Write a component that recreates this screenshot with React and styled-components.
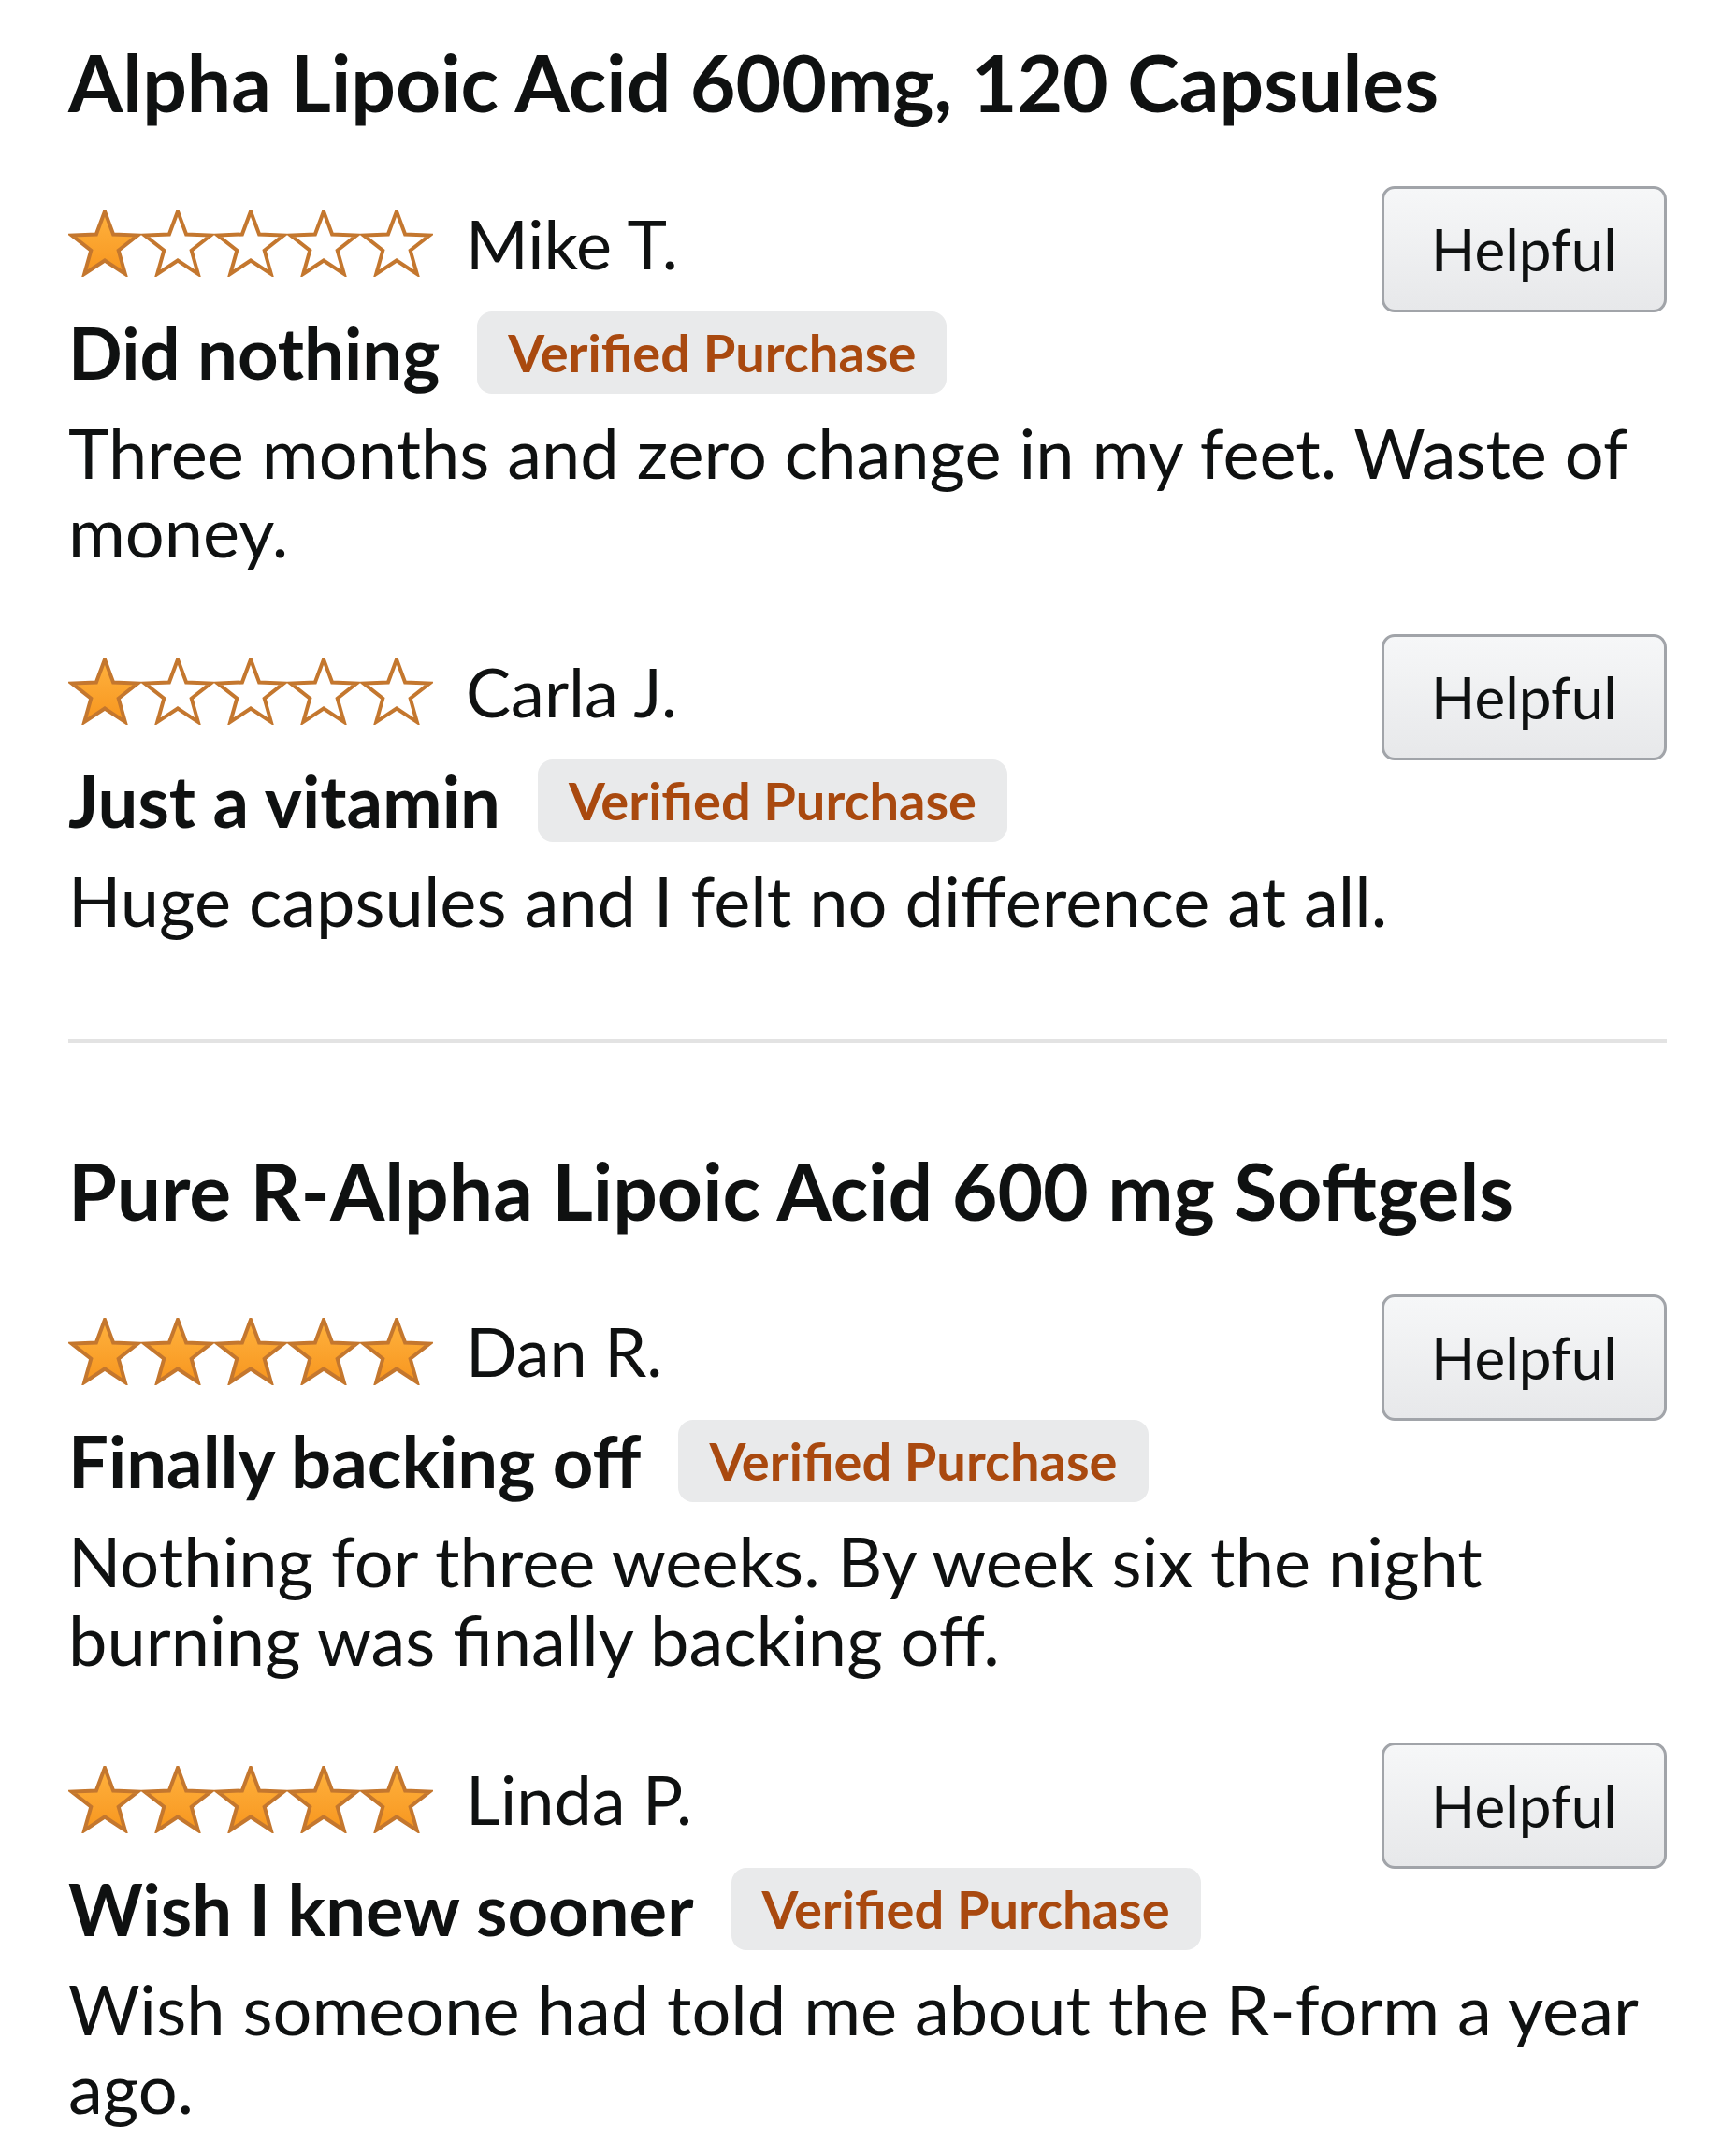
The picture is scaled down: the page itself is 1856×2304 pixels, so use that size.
import React from 'react'
import styled, { createGlobalStyle } from 'styled-components'

const GlobalStyle = createGlobalStyle`
  html, body {
    margin: 0;
    padding: 0;
    background: #ffffff;
  }
  body {
    font-family: Lato, "Open Sans", sans-serif;
    color: #0f1111;
  }
`

const products = [
    {
        title: 'Alpha Lipoic Acid 600mg, 120 Capsules',
        reviews: [
            {
                stars: 1,
                name: 'Mike T.',
                headline: 'Did nothing',
                body: 'Three months and zero change in my feet. Waste of money.'
            },
            {
                stars: 1,
                name: 'Carla J.',
                headline: 'Just a vitamin',
                body: 'Huge capsules and I felt no difference at all.'
            }
        ]
    },
    {
        title: 'Pure R-Alpha Lipoic Acid 600 mg Softgels',
        reviews: [
            {
                stars: 5,
                name: 'Dan R.',
                headline: 'Finally backing off',
                body: 'Nothing for three weeks. By week six the night burning was finally backing off.'
            },
            {
                stars: 5,
                name: 'Linda P.',
                headline: 'Wish I knew sooner',
                body: 'Wish someone had told me about the R-form a year ago.'
            }
        ]
    }
]

const STAR_POINTS =
    '39,2 48.1,26.5 74.2,27.6 53.7,43.8 60.8,68.9 39,54.5 17.2,68.9 24.3,43.8 3.8,27.6 29.9,26.5'

const Star = ({ filled }) => (
    <svg width="78" height="72" viewBox="0 0 78 72">
        <defs>
            <linearGradient id="starFill" x1="0" y1="0" x2="0" y2="1">
                <stop offset="0" stopColor="#ffb23e" />
                <stop offset="1" stopColor="#f7961f" />
            </linearGradient>
        </defs>
        <polygon
            points={STAR_POINTS}
            fill={filled ? 'url(#starFill)' : '#ffffff'}
            stroke="#c4772e"
            strokeWidth="4"
            strokeLinejoin="miter"
        />
    </svg>
)

const Rating = ({ value }) => (
    <Stars>
        {[1, 2, 3, 4, 5].map((n) => (
            <Star key={n} filled={n <= value} />
        ))}
    </Stars>
)

const Review = ({ review }) => (
    <ReviewCard>
        <Header>
            <Rating value={review.stars} />
            <Name>{review.name}</Name>
        </Header>
        <HelpfulButton>Helpful</HelpfulButton>
        <HeadlineRow>
            <Headline>{review.headline}</Headline>
            <Badge>Verified Purchase</Badge>
        </HeadlineRow>
        <Body>{review.body}</Body>
    </ReviewCard>
)

const App = () => {
    return (
        <>
            <GlobalStyle />
            <Page>
                {products.map((product, i) => (
                    <React.Fragment key={product.title}>
                        {i > 0 && <Divider />}
                        <Section>
                            <Title>{product.title}</Title>
                            <ReviewList>
                                {product.reviews.map((review) => (
                                    <Review key={review.name} review={review} />
                                ))}
                            </ReviewList>
                        </Section>
                    </React.Fragment>
                ))}
            </Page>
        </>
    )
}

export default App

// CSS

const Page = styled.div`
padding: 38px 74px 40px 73px;
`

const Section = styled.section`
display: flex;
flex-direction: column;
`

const Title = styled.h1`
margin: 0 0 60px;
font-size: 84px;
line-height: 1.2;
font-weight: 700;
color: #0f1111;
`

const ReviewList = styled.div`
display: flex;
flex-direction: column;
gap: 68px;
`

const ReviewCard = styled.div`
display: grid;
grid-template-columns: 1fr auto;
grid-template-rows: auto auto auto;
`

const Header = styled.div`
grid-column: 1;
grid-row: 1;
display: flex;
align-items: center;
gap: 35px;
margin-top: 18px;
height: 86px;
`

const Stars = styled.div`
display: flex;
`

const Name = styled.span`
font-size: 72px;
line-height: 1.2;
`

const HeadlineRow = styled.div`
grid-column: 1;
grid-row: 2;
display: flex;
align-items: center;
gap: 40px;
margin-top: 29px;
height: 90px;
`

const Headline = styled.h2`
margin: 0;
font-size: 76px;
line-height: 1.2;
font-weight: 700;
`

const Badge = styled.span`
display: inline-flex;
align-items: center;
height: 88px;
padding: 0 33px;
box-sizing: border-box;
border-radius: 16px;
background: #e9eaeb;
color: #a9490f;
font-size: 56px;
font-weight: 700;
`

const Body = styled.p`
grid-column: 1 / span 2;
grid-row: 3;
margin: 20px 0 0;
font-size: 74px;
line-height: 84px;
`

const HelpfulButton = styled.button`
grid-column: 2;
grid-row: 1 / span 2;
align-self: start;
width: 305px;
height: 135px;
box-sizing: border-box;
border: 3px solid #a1a4a9;
border-radius: 14px;
background: linear-gradient(#f6f7f8, #e7e8ea);
color: #0f1111;
font-family: Lato, "Open Sans", sans-serif;
font-size: 62px;
cursor: pointer;
`

const Divider = styled.hr`
margin: 106px 0 108px;
height: 4px;
border: none;
background: #e3e3e3;
`
